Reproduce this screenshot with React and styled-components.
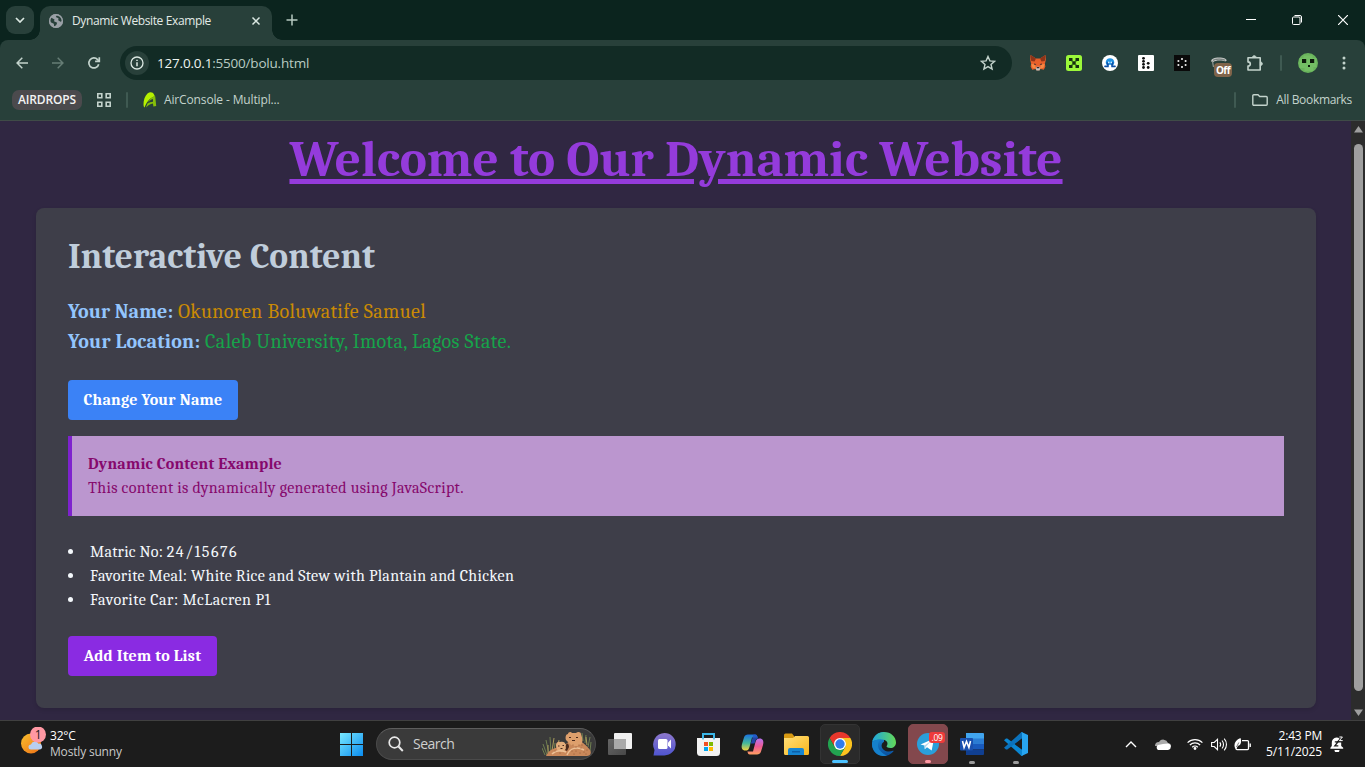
import React from "react";
import styled, { createGlobalStyle } from "styled-components";

const GlobalStyle = createGlobalStyle`
  * { box-sizing: border-box; }
  html, body { margin: 0; padding: 0; overflow: hidden; }
  body { font-family: "Segoe UI Variable", "Open Sans", "Noto Sans", sans-serif; }
  h1, h2, p, ul { margin: 0; padding: 0; }
  button { border: 0; padding: 0; background: none; font: inherit; color: inherit; }
  svg { display: block; flex: none; }
`;

const Screen = styled.div`
  width: 1365px;
  height: 767px;
  display: flex;
  flex-direction: column;
  overflow: hidden;
  background: #0b241e;
`;

const Label = styled.span`
  font-size: ${(p) => p.$size || 12}px;
  font-weight: ${(p) => p.$weight || 400};
  letter-spacing: ${(p) => p.$track || 0}px;
  color: ${(p) => p.$color || "#e3ebe7"};
  line-height: 16px;
  white-space: nowrap;
`;

/* ---------- tab strip ---------- */
const TabStrip = styled.div`
  height: 40px;
  flex: none;
  display: flex;
  padding: 6px 0 0 6px;
  background: #0b241e;
`;
const TabSearch = styled.button`
  width: 28px;
  height: 28px;
  border-radius: 9px;
  background: #28403a;
  display: flex;
  align-items: center;
  justify-content: center;
`;
const Tab = styled.div`
  position: relative;
  width: 232px;
  height: 34px;
  margin-left: 6px;
  padding: 0 11px 5px 8px;
  display: flex;
  align-items: center;
  border-radius: 10px 10px 0 0;
  background: #28403a;
  &::before, &::after {
    content: "";
    position: absolute;
    bottom: 0;
    width: 10px;
    height: 10px;
  }
  &::before { left: -10px; background: radial-gradient(circle at 0 0, transparent 9.5px, #28403a 10px); }
  &::after { right: -10px; background: radial-gradient(circle at 100% 0, transparent 9.5px, #28403a 10px); }
`;
const TabTitle = styled(Label)`
  flex: 1;
  margin-left: 8px;
`;
const NewTab = styled.button`
  width: 28px;
  height: 28px;
  margin-left: 6px;
  display: flex;
  align-items: center;
  justify-content: center;
`;
const WindowControls = styled.div`
  margin-left: auto;
  margin-right: -1px;
  height: 28px;
  display: flex;
`;
const WindowButton = styled.button`
  width: 46px;
  display: flex;
  align-items: center;
  justify-content: center;
`;

/* ---------- toolbar ---------- */
const Chrome = styled.div`
  height: 81px;
  flex: none;
  display: flex;
  flex-direction: column;
  padding-top: 6px;
  border-radius: 8px 8px 0 0;
  border-bottom: 1px solid #3f4b47;
  background: #28403a;
`;
const Toolbar = styled.div`
  height: 34px;
  display: flex;
  align-items: center;
  padding: 0 3px 0 4px;
`;
const IconSlot = styled.button`
  position: relative;
  width: ${(p) => p.$w || 36}px;
  height: 34px;
  flex: none;
  display: flex;
  align-items: center;
  justify-content: center;
`;
const Omnibox = styled.div`
  width: 892px;
  height: 34px;
  margin: 0 8px;
  display: flex;
  align-items: center;
  padding: 0 16px 0 5px;
  border-radius: 17px;
  background: #122b25;
`;
const SiteInfo = styled.div`
  width: 24px;
  height: 24px;
  border-radius: 50%;
  background: #28403a;
  display: flex;
  align-items: center;
  justify-content: center;
  margin-right: 8px;
`;
const Url = styled(Label)`
  flex: 1;
  line-height: 18px;
  b { font-weight: 400; color: #eef5f2; }
`;
const Divider = styled.span`
  width: 2px;
  height: 16px;
  border-radius: 1px;
  background: #3f5a52;
  margin: ${(p) => p.$m || 0};
`;
const OffBadge = styled.span`
  position: absolute;
  left: 14px;
  top: 17px;
  width: 18px;
  height: 14px;
  border-radius: 4px;
  background: #80644a;
  color: #fff;
  font-size: 10px;
  font-weight: 700;
  line-height: 14px;
  letter-spacing: -0.5px;
  text-align: center;
`;

const Bookmarks = styled.div`
  height: 40px;
  display: flex;
  align-items: center;
  padding: 0 13px 0 12px;
`;
const GroupChip = styled.span`
  width: 70px;
  height: 20px;
  border-radius: 7px;
  background: #4b4a4d;
  display: flex;
  align-items: center;
  justify-content: center;
`;
const BookmarkItem = styled.div`
  display: flex;
  align-items: center;
  gap: ${(p) => p.$gap}px;
  margin-left: ${(p) => p.$push || "0"};
`;

/* ---------- web page ---------- */
const Viewport = styled.div`
  height: 599px;
  flex: none;
  display: flex;
  background: #302742;
`;
const Page = styled.main`
  width: 1351px;
  padding: 8px 35px 0 36px;
  font-family: Cambria, Caladea, "Liberation Serif", serif;
`;
const Title = styled.h1`
  height: 79px;
  line-height: 62px;
  font-size: 51.2px;
  font-weight: 700;
  text-align: center;
  color: #943bdb;
  text-decoration: underline;
  text-decoration-thickness: 5px;
  text-underline-offset: 3px;
`;
const Card = styled.section`
  height: 500px;
  padding: 32px;
  border-radius: 8px;
  background: #3e3e49;
  box-shadow: 0 2px 4px rgba(0, 0, 0, 0.12);
`;
const Heading = styled.h2`
  font-size: 35.5px;
  line-height: 34px;
  height: 57px;
  letter-spacing: 0.05px;
  color: #c0cddb;
`;
const Fact = styled.p`
  font-size: 20px;
  line-height: 30px;
  white-space: nowrap;
  color: ${(p) => p.$color};
  letter-spacing: 0.4px;
  strong { color: #93c5fd; letter-spacing: ${(p) => p.$track}px; }
`;
const ActionButton = styled.button`
  display: block;
  height: 40px;
  width: ${(p) => p.$w}px;
  margin-top: ${(p) => p.$mt}px;
  border-radius: 4px;
  background: ${(p) => p.$bg};
  color: #fff;
  font-size: 16px;
  font-weight: 700;
  line-height: 24px;
  letter-spacing: 0.25px;
  white-space: nowrap;
`;
const Callout = styled.div`
  height: 80px;
  margin-top: 16px;
  padding: 16px;
  border-left: 4px solid #7e22ce;
  background: #bb96cf;
  color: #86086c;
  font-size: 16px;
  line-height: 24px;
  letter-spacing: 0.32px;
  strong { display: block; letter-spacing: 0.23px; }
`;
const List = styled.ul`
  margin-top: 24px;
  list-style: none;
`;
const Item = styled.li`
  display: flex;
  align-items: center;
  height: 24px;
  font-size: 16px;
  line-height: 24px;
  color: #f4f8fc;
  white-space: pre;
  letter-spacing: ${(p) => p.$track}px;
  &::before {
    content: "";
    width: 5px;
    height: 5px;
    margin: 0 17px 1px 0;
    border-radius: 50%;
    background: #f4f8fc;
  }
`;
const Digits = styled.span`
  letter-spacing: 1.5px;
`;
const Scrollbar = styled.div`
  width: 14px;
  display: flex;
  flex-direction: column;
  align-items: center;
  justify-content: space-between;
  padding: 5px 0 4px 0;
  background: #2c2c2c;
`;
const Thumb = styled.div`
  width: 9px;
  height: 547px;
  margin-bottom: 7px;
  border-radius: 5px;
  background: #9f9f9f;
`;

/* ---------- taskbar ---------- */
const Taskbar = styled.footer`
  height: 47px;
  flex: none;
  display: flex;
  border-top: 1px solid #404040;
  background: #1c1c1c;
`;
const Weather = styled.div`
  width: 329px;
  padding: 6px 0 0 20px;
  display: flex;
`;
const WeatherText = styled.div`
  display: flex;
  flex-direction: column;
  padding-top: 1px;
  margin-left: 4px;
`;
const TaskSlot = styled.div`
  position: relative;
  width: 44px;
  height: 46px;
  display: flex;
  align-items: center;
  justify-content: center;
`;
const ActiveTile = styled.div`
  position: relative;
  width: 40px;
  height: 40px;
  border-radius: 5px;
  display: flex;
  align-items: center;
  justify-content: center;
  background: ${(p) => p.$bg};
  border: 1px solid ${(p) => p.$edge};
`;
const Indicator = styled.span`
  position: absolute;
  bottom: ${(p) => p.$bottom || 0}px;
  left: 50%;
  width: ${(p) => p.$w || 6}px;
  height: 3px;
  transform: translateX(-50%);
  border-radius: 2px;
  background: ${(p) => p.$color || "#9b9b9b"};
`;
const CountBadge = styled.span`
  position: absolute;
  left: 20px;
  top: 7px;
  width: 16px;
  height: 11px;
  border-radius: 3px;
  background: #ee3b3b;
  color: #fff;
  font-size: 8.5px;
  line-height: 11px;
  text-align: center;
  letter-spacing: -0.4px;
`;
const SearchBox = styled.div`
  width: 220px;
  height: 32px;
  margin: 7px 2px 0 3px;
  padding: 0 3px 0 11px;
  display: flex;
  align-items: center;
  border-radius: 16px;
  border: 1px solid #4a4a4a;
  border-top-color: #5e5e5e;
  background: #3a3a3a;
`;
const SearchLabel = styled(Label)`
  flex: 1;
  margin-left: 9px;
`;
const Tray = styled.div`
  margin-left: auto;
  display: flex;
  align-items: center;
  padding-right: 13px;
`;
const TrayIcon = styled.span`
  width: ${(p) => p.$w}px;
  display: flex;
  justify-content: center;
`;
const Clock = styled.div`
  width: 64px;
  display: flex;
  flex-direction: column;
  align-items: flex-end;
`;

/* ---------- drawings ---------- */
const Svg = ({ w = 16, h, vb, children, ...rest }) => (
  <svg width={w} height={h || w} viewBox={vb || `0 0 ${w} ${h || w}`} fill="none" {...rest}>{children}</svg>
);
const line = { stroke: "#c3d3cc", strokeWidth: 1.7 };

const GlobeIcon = () => (
  <Svg w={16}>
    <circle cx="8" cy="8" r="7" fill="#9aa0a6" />
    <path d="M3 4.500 6.500 6.500 6 8.200 9.200 9.700 8.300 12 6.200 13.500 5.800 10.800 2.600 9.200 1.600 7ZM9 1.800 7.800 4 10.500 5.200 10.200 7.200 12.600 8.800 14.300 8A6.500 6.500 0 0 0 9 1.800Z" fill="#28403a" />
    <circle cx="8" cy="8" r="6.3" stroke="#9aa0a6" strokeWidth="1.4" />
  </Svg>
);
const ReloadIcon = () => (
  <Svg w={16}>
    <path d="M12.7 9.2A5 5 0 1 1 11.6 4.6L13 6" {...line} />
    <path d="M13.3 2.2V6.4H9.1" {...line} />
  </Svg>
);
const FoxIcon = () => (
  <Svg w={18} h={16}>
    <path d="M1.500 0 7 3.500h4L16.500 0l.3 5-1 4 .6 2.500-1.600 3.200-3.300-.7-1 1.200h-3l-1-1.200-3.300.7L1.600 11.500 2.200 9l-1-4Z" fill="#e8602a" />
    <path d="M1.500 0 7 3.500 5.500 6.500 2.200 6ZM16.500 0 11 3.500l1.500 3L15.800 6Z" fill="#8f3419" />
    <path d="M2.200 9 6 9.500 7 13.500l-3.300-.5ZM15.800 9 12 9.500l-1 4 3.300-.5Z" fill="#f58a45" />
    <path d="M5.500 8.300 7.300 9.600l-2 .4ZM12.500 8.300l-1.800 1.300 2 .4Z" fill="#2a2530" />
    <path d="m6.800 13 .8-1.200h2.800l.8 1.200-.6 2.500H7.400Z" fill="#c9c4c0" />
    <path d="M7.800 12h2.400l.2 1.300H7.600Z" fill="#30282c" />
  </Svg>
);
const Dots = ({ pts, r = 1.1, fill }) => pts.map(([x, y], i) => <circle key={i} cx={x} cy={y} r={r} fill={fill} />);
const LimeIcon = () => (
  <Svg w={16}>
    <rect width="16" height="16" rx="2.500" fill="#9cf83a" />
    <path d="M3 3h3.500v3H3zM9.500 3H13v3H9.500zM3 10h3.500v3H3zM9.500 10H13v3H9.500zM6.300 6.300h3.400v3.400H6.300z" fill="#16300f" />
    <path d="M5.500 5.500h1.300v1.300H5.500zM9.200 5.500h1.300v1.300H9.200zM5.500 9.200h1.300v1.300H5.500zM9.200 9.200h1.300v1.300H9.200z" fill="#2c5a1b" />
  </Svg>
);
const OctoIcon = () => (
  <Svg w={16}>
    <circle cx="8" cy="8" r="8" fill="#fff" />
    <path d="M5.300 10.800C2.500 8.500 3.500 3.300 8 3.300S13.500 8.500 10.700 10.800" fill="#1f93e4" />
    <path d="M3 11.300h3.200c.7-1.200-.9-2-.9-3.800M13 11.300H9.800c-.7-1.200.9-2 .9-3.800" stroke="#0c4fa6" strokeWidth="1.700" strokeLinecap="round" />
    <path d="M6.800 12.500V9.800h2.400v2.700Z" fill="#fff" />
    <circle cx="6.700" cy="7.300" r=".9" fill="#c6e9ff" /><circle cx="9.300" cy="7.300" r=".9" fill="#c6e9ff" />
  </Svg>
);
const DotsLightIcon = () => (
  <Svg w={16}>
    <rect width="16" height="16" rx="1" fill="#fff" />
    <Dots r={1.4} fill="#101010" pts={[[5.500, 3.300], [5.500, 6.300], [5.500, 9.300], [5.500, 12.500], [10.200, 8.300], [10.200, 12.500]]} />
  </Svg>
);
const DotsDarkIcon = () => (
  <Svg w={16}>
    <rect width="16" height="16" fill="#0a0a0a" />
    <Dots r={1.05} fill="#f0f0f0" pts={[[8, 4], [4.400, 6], [11.600, 6], [4.400, 10], [11.600, 10], [8, 12]]} />
  </Svg>
);
const HatIcon = () => (
  <Svg w={18} h={16}>
    <path d="M1 6.500C1.500 3.500 4 2.500 9 2.500s7 1.200 7.800 3l-1.600 1C13 5 5 5 3.500 7Z" fill="#c0c3c1" />
    <path d="M3 5.300C6 3.700 12 3.700 15 5.200" stroke="#5d6965" strokeWidth=".9" />
    <path d="M2.500 6.500 3.500 12" stroke="#8b9490" strokeWidth="1.300" />
  </Svg>
);
const PuzzleIcon = () => (
  <Svg w={18}>
    <path d="M2 3.800h12.200v12.200H2v-3.900c3.100-.2 3.100-4 0-4.200Z" {...line} strokeWidth="1.600" strokeLinejoin="round" />
    <path d="M6.300 3.500C6.500 1 10 1 10.200 3.500ZM14.300 7.800c2.800.3 2.800 3.600 0 3.900Z" fill="#c3d3cc" stroke="#c3d3cc" strokeWidth=".8" />
  </Svg>
);
const AvatarIcon = () => (
  <Svg w={20}>
    <circle cx="10" cy="10" r="10" fill="#69b45c" />
    <path d="M1.500 5h4V2.500h9V5h4v9h-3v4h-9v-3h-5Z" fill="#7cc66c" opacity=".55" />
    <path d="M4 6h4.200v4H4zM12 6h4.200v4H12zM10 12h2v2h-2z" fill="#0c1a0b" />
  </Svg>
);

const BearArt = () => (
  <Svg w={50} h={26}>
    <g stroke="#6f8050" strokeWidth="1">
      <path d="M5 24 1 13M7 23 4 9M9 22 8 6M12 21l1-9M3 24 0 17M41 10l-1-8M43 12l1-8M46 16l2-10M48 20l1-9" />
      <path d="M10 20 12 7M15 18l2-9M45 14l-1-8M6 22 6 14" stroke="#a89a5c" />
    </g>
    <path d="M4 25C6 20 11 17 17 16l7-3c3-3 8-5 13-3 4 1 8 5 11 9 2 3 0 6-3 6H8Z" fill="#c9885a" />
    <path d="M24 9c-1-3 0-6 2-6 0-2 3-3 4-1h4c2-2 5-1 5 1 1 3 2 6 1 9-3 4-9 4-12 1Z" fill="#dd9f6c" />
    <path d="M14 14c0-2 2-4 4-3 3-1 5 0 6 3 1 3-1 6-4 7-4 0-6-3-6-7Z" fill="#e3ad7b" />
    <path d="M24 14c1-3 3-1 3 2l-2 4-2-1c2-2 0-3 1-5Z" fill="#4a2a1c" />
    <path d="M27 6.500h2M34 6.500h2M30 9.500h3M16 15h1.500M20.500 14.500H22M18.500 17.500h2" stroke="#4a2a1c" strokeWidth="1.200" />
    <path d="M25 24c3-7 10-9 17-5M10 23c4-4 9-4 14-2" stroke="#ecc096" strokeWidth="1.500" />
    <Dots r={0.55} fill="#8e5432" pts={[[31, 14], [34, 16], [37, 14], [39, 17], [42, 21], [34, 20], [30, 20], [44, 23], [38, 22], [18, 22], [13, 20], [45, 19], [32, 23], [40, 14]]} />
  </Svg>
);
const grads = (
  <svg width="0" height="0" aria-hidden="true">
    <defs>
      <linearGradient id="win" x1="0" y1="0" x2="1" y2="1"><stop stopColor="#79e9ff" /><stop offset="1" stopColor="#0a8cf0" /></linearGradient>
      <linearGradient id="sun" x1="0" y1="0" x2="1" y2="1"><stop stopColor="#f9c02e" /><stop offset="1" stopColor="#ee6f16" /></linearGradient>
      <linearGradient id="chat" x1="0" y1="0" x2="0" y2="1"><stop stopColor="#8e78cc" /><stop offset="1" stopColor="#4f55d0" /></linearGradient>
      <linearGradient id="cpL" x1="0" y1="0" x2="0" y2="1"><stop stopColor="#1b73e0" /><stop offset=".55" stopColor="#45b998" /><stop offset="1" stopColor="#f5d33c" /></linearGradient>
      <linearGradient id="cpR" x1="0" y1="0" x2="0" y2="1"><stop stopColor="#b672f0" /><stop offset=".5" stopColor="#ee5a94" /><stop offset="1" stopColor="#ffa060" /></linearGradient>
      <linearGradient id="fold" x1="0" y1="0" x2="1" y2="1"><stop stopColor="#ffe07a" /><stop offset="1" stopColor="#f9b51b" /></linearGradient>
      <linearGradient id="edgeG" x1="0" y1="0" x2="1" y2="0"><stop stopColor="#1ea7e0" /><stop offset="1" stopColor="#64d957" /></linearGradient>
      <linearGradient id="edgeB" x1="0" y1="0" x2="0" y2="1"><stop stopColor="#1c8fdb" /><stop offset="1" stopColor="#0a4f9e" /></linearGradient>
      <linearGradient id="view" x1="0" y1="0" x2="1" y2="1"><stop stopColor="#666" /><stop offset="1" stopColor="#484848" /></linearGradient>
    </defs>
  </svg>
);
const WindowsIcon = () => (
  <Svg w={23}><path d="M0 0h11v11H0zM12 0h11v11H12zM0 12h11v11H0zM12 12h11v11H12z" fill="url(#win)" /></Svg>
);
const TaskViewIcon = () => (
  <Svg w={24} h={22}>
    <rect x="6" y="0" width="18" height="16" rx="1" fill="#f0f0f0" />
    <rect x="0" y="6" width="18" height="16" rx="1" fill="url(#view)" />
    <rect x="6" y="6" width="12" height="10" fill="#a9a9a9" />
  </Svg>
);
const ChatIcon = () => (
  <Svg w={23}>
    <path d="M11.500 0a11.200 11.200 0 1 1 0 22.400H.5L1.500 17A11.500 11.500 0 0 1 11.500 0Z" fill="url(#chat)" />
    <rect x="5" y="6" width="9.500" height="10" rx="1.500" fill="#fff" />
    <path d="m15 9.500 3-3v9l-3-3Z" fill="#fff" />
  </Svg>
);
const StoreIcon = () => (
  <Svg w={23}>
    <path d="M6 5.500V1h11v4.500" stroke="#3bb7e8" strokeWidth="2" />
    <path d="M0 5h23v14.500a3.500 3.500 0 0 1-3.500 3.500h-16A3.500 3.500 0 0 1 0 19.500Z" fill="#f2f2f2" />
    <path d="M6 3v3.500M17 3v3.500" stroke="#3bb7e8" strokeWidth="1.500" />
    <path d="M7 9h4v4H7z" fill="#f25022" /><path d="M12 9h4v4h-4z" fill="#7fba00" />
    <path d="M7 14h4v4H7z" fill="#00a4ef" /><path d="M12 14h4v4h-4z" fill="#ffb900" />
  </Svg>
);
const CopilotIcon = () => (
  <Svg w={23}>
    <path d="M7 1.500h7c2 0 2 1 2.600 3L11 4.500 8.500 14c-.8 3-2 3.500-4 3.500C1 17.500 0 15 1 11l2-6.500C3.800 2.200 5 1.500 7 1.500Z" fill="url(#cpL)" />
    <path d="M16 21.500H9c-2 0-2-1-2.600-3h5.600L14.500 9c.8-3 2-3.500 4-3.500C22 5.500 23 8 22 12l-2 6.500c-.8 2.300-2 3-4 3Z" fill="url(#cpR)" />
    <path d="M12.500 1.500h1.500c1.800 0 2.600 2 3.200 4-1.500 0-2.400.8-3 3l-.6 2H9.800L11.500 5Z" fill="#2450c8" opacity=".8" />
  </Svg>
);
const ExplorerIcon = () => (
  <Svg w={25} h={22}>
    <path d="M0 2a1.500 1.500 0 0 1 1.500-1.500H8L10 3v4H0Z" fill="#d89a12" />
    <path d="M0 5h9l2-2h12.500A1.500 1.500 0 0 1 25 4.500v16a1.500 1.500 0 0 1-1.500 1.500h-22A1.500 1.500 0 0 1 0 20.500Z" fill="url(#fold)" />
    <path d="M4 22v-5a2 2 0 0 1 2-2h12a2 2 0 0 1 2 2v5Z" fill="#1685d1" /><path d="M8 18h8v1.500H8z" fill="#0c5fa8" />
  </Svg>
);
const ChromeIcon = () => (
  <Svg w={24}>
    <path d="M1.600 6A12 12 0 0 1 22.400 6H12L6.800 15Z" fill="#e8372c" />
    <path d="M22.400 6A12 12 0 0 1 12 24l5.200-9V9L12 6Z" fill="#fcc31e" />
    <path d="M1.600 6A12 12 0 0 0 12 24l5.200-9H6.800Z" fill="#22a350" />
    <circle cx="12" cy="12" r="6" fill="#fff" /><circle cx="12" cy="12" r="4.700" fill="#2f7bed" />
  </Svg>
);
const EdgeIcon = () => (
  <Svg w={24}>
    <path d="M12 0a12 12 0 1 0 9.500 19.300c.3-.4-.1-.8-.6-.5C16 21 10 18.500 9.600 14c-.1-2 1-3.300 2.400-4.200Z" fill="url(#edgeB)" />
    <path d="M.2 10C1.500 4 6 0 12 0c7 0 12 5 12 10.500 0 3.500-2.500 5.500-5.500 5.500-3 0-4.500-1-3.800-1.900 2-2.600.3-6.600-4.700-6.600C5.500 7.500 1.500 8 .2 10Z" fill="url(#edgeG)" />
    <path d="M.1 10.500C1.300 8.500 5 7.200 9.500 7.500 5.500 9 4.500 15 8.500 19c1.800 2 4 3.500 6.500 4.600C5 26-.8 18 .1 10.500Z" fill="#1580cc" />
  </Svg>
);
const TelegramIcon = () => (
  <Svg w={22}>
    <circle cx="11" cy="11" r="11" fill="#2a9fda" />
    <path d="m3.500 11.500 13.500-6-2.300 12-4.700-3.200-2.200 2-.3-3.800Z" fill="#fff" /><path d="m7.500 12.500 7-5-5.500 6-1.200 2.800Z" fill="#b4d8ee" />
  </Svg>
);
const WordIcon = () => (
  <Svg w={24} h={22}>
    <path d="M6 0h17a1 1 0 0 1 1 1v5H6Z" fill="#41a5ee" /><path d="M6 5.500h18V11H6z" fill="#2b7cd3" />
    <path d="M6 11h18v5.500H6z" fill="#185abd" /><path d="M6 16.500h18V21a1 1 0 0 1-1 1H6Z" fill="#103f91" />
    <rect x="0" y="5" width="13" height="12.500" rx="1" fill="#1950ae" />
    <path d="m2.500 8 1.600 6.500 2.400-6 2.400 6L10.500 8" stroke="#fff" strokeWidth="1.600" />
  </Svg>
);
const CodeIcon = () => (
  <Svg w={24}>
    <path d="M0 8.300 2 6.600 3.300 6.600 18.500 18v6h-1Z" fill="#0a86d2" />
    <path d="M0 15.700l2 1.700h1.300L18.500 6V0h-1Z" fill="#0b72bc" />
    <path d="M17.500 0 24 3v18l-6.500 3 .5-2V2Z" fill="#28a5f0" />
    <path d="m18 6.800-6.800 5.200 6.800 5.200Z" fill="#1c1c1c" />
  </Svg>
);
const WeatherIcon = () => (
  <Svg w={26} h={28}>
    <circle cx="11" cy="16.500" r="10" fill="url(#sun)" />
    <path d="M11 22.500a2.500 2.500 0 0 1 0-5 4 4 0 0 1 7.500-.8 3 3 0 0 1 1.500 5.800Z" fill="#b8cff0" />
    <circle cx="18" cy="7.500" r="8" fill="#ff98a3" />
    <text x="18.200" y="11.800" textAnchor="middle" fontFamily="Open Sans, sans-serif" fontSize="12" fill="#1c1c1c">1</text>
  </Svg>
);
const BellIcon = () => (
  <Svg w={15} h={16}>
    <path d="M1.800 7A5 5 0 0 1 6.500 1.500c3 0 4.500 2 4.700 4.500v4l2 1.800v1H.4v-1l1.400-1.800Z" fill="#fff" /><path d="M4.500 14h5a2.500 2.500 0 0 1-5 0Z" fill="#fff" />
    <path d="M4.800 5.800H8L4.800 9.900h3.500" stroke="#1c1c1c" strokeWidth="1.300" />
    <path d="M8.800 1h4L9 5.300h4.300" stroke="#1c1c1c" strokeWidth="2.600" /><path d="M9.400 1h3L9.400 4.600h3.300" stroke="#fff" strokeWidth="1" />
  </Svg>
);

export default function App() {
  return (
    <Screen>
      <GlobalStyle />
      <TabStrip>
        <TabSearch><Svg w={10} h={6}><path d="m1 1 4 4 4-4" stroke="#dbe8e2" strokeWidth="1.700" /></Svg></TabSearch>
        <Tab>
          <GlobeIcon />
          <TabTitle $track={-0.38}>Dynamic Website Example</TabTitle>
          <Svg w={10}><path d="m1.500 1.500 7 7m0-7-7 7" stroke="#dbe8e2" strokeWidth="1.500" /></Svg>
        </Tab>
        <NewTab><Svg w={12}><path d="M6 .5v11M.5 6h11" stroke="#b7c9c1" strokeWidth="1.500" /></Svg></NewTab>
        <WindowControls>
          <WindowButton><Svg w={10}><path d="M0 4.500h10" stroke="#fff" /></Svg></WindowButton>
          <WindowButton>
            <Svg w={10}><rect x=".5" y="2" width="7.500" height="7.500" rx="1" stroke="#fff" /><path d="M2.500.5H8A1.500 1.500 0 0 1 9.500 2v5.500" stroke="#fff" /></Svg>
          </WindowButton>
          <WindowButton><Svg w={10}><path d="m0 0 10 10M10 0 0 10" stroke="#fff" strokeWidth="1.200" /></Svg></WindowButton>
        </WindowControls>
      </TabStrip>

      <Chrome>
        <Toolbar>
          <IconSlot><Svg w={12}><path d="M12 6H1M6.300.8 1.100 6l5.200 5.200" {...line} strokeWidth="1.500" /></Svg></IconSlot>
          <IconSlot><Svg w={12}><path d="M0 6h11M5.700.8 10.900 6l-5.200 5.200" {...line} strokeWidth="1.500" stroke="#667d75" /></Svg></IconSlot>
          <IconSlot><ReloadIcon /></IconSlot>
          <Omnibox>
            <SiteInfo>
              <Svg w={14}><circle cx="7" cy="7" r="6" stroke="#dbe8e2" strokeWidth="1.300" /><path d="M7 6.200v4M7 3.700v1.400" stroke="#dbe8e2" strokeWidth="1.500" /></Svg>
            </SiteInfo>
            <Url $size={13.5} $track={-0.2} $color="#b9cbc3"><b>127.0.0.1</b>:5500/bolu.html</Url>
            <Svg w={16}><path d="m8 1.500 1.900 4.400 4.700.4-3.600 3.100 1.100 4.700L8 11.600l-4.100 2.500L5 9.400 1.400 6.300l4.700-.4Z" stroke="#c3d3cc" strokeWidth="1.400" /></Svg>
          </Omnibox>
          <IconSlot><FoxIcon /></IconSlot>
          <IconSlot><LimeIcon /></IconSlot>
          <IconSlot><OctoIcon /></IconSlot>
          <IconSlot><DotsLightIcon /></IconSlot>
          <IconSlot><DotsDarkIcon /></IconSlot>
          <IconSlot $w={38}><HatIcon /><OffBadge>Off</OffBadge></IconSlot>
          <IconSlot $w={34}><PuzzleIcon /></IconSlot>
          <Divider $m="0 0 0 8px" />
          <IconSlot $w={52}><AvatarIcon /></IconSlot>
          <IconSlot $w={20}><Svg w={4} h={14}><Dots r={1.5} fill="#c3d3cc" pts={[[2, 1.900], [2, 7], [2, 12.100]]} /></Svg></IconSlot>
        </Toolbar>
        <Bookmarks>
          <GroupChip><Label $weight={600} $track={-0.16} $color="#f3f3f3">AIRDROPS</Label></GroupChip>
          <IconSlot $w={44}>
            <Svg w={14}><path d="M.8.800h4v4h-4zM9.200.800h4v4h-4zM.8 9.200h4v4h-4zM9.200 9.200h4v4h-4z" stroke="#c3d3cc" strokeWidth="1.600" /></Svg>
          </IconSlot>
          <Divider $m="0 15px 0 0" />
          <BookmarkItem $gap={7}>
            <Svg w={14} h={16}><path d="M1.500 15.500C-.5 14 .5 5 4.500 1.500 7-.5 10 0 11 2.500L12 4.500C8 5 4 9 1.500 15.500Z" fill="#b5f000" /><path d="m10.500 4.500 1.700-.3 1 9.800-2.800.5-.5-3c-2.600.4-4.700 1.700-7 4 1.500-5 4-9 7.600-11Z" fill="#86bf0a" /><path d="M4.500 11.500C6 9 7.800 7.500 10 7v2.800c-2 .2-3.800.8-5.500 1.700Z" fill="#28403a" /></Svg>
            <Label $track={-0.14} $color="#c3d3cc">AirConsole - Multipl...</Label>
          </BookmarkItem>
          <BookmarkItem $gap={8} $push="auto">
            <Divider $m="0 8px 0 0" />
            <Svg w={16} h={12}><path d="M.8 1.800A1 1 0 0 1 1.800.800H6l1.700 1.700h6.500a1 1 0 0 1 1 1v6.700a1 1 0 0 1-1 1H1.800a1 1 0 0 1-1-1Z" stroke="#c3d3cc" strokeWidth="1.400" /></Svg>
            <Label $track={-0.32} $color="#c3d3cc">All Bookmarks</Label>
          </BookmarkItem>
        </Bookmarks>
      </Chrome>

      <Viewport>
        <Page>
          <Title>Welcome to Our Dynamic Website</Title>
          <Card>
            <Heading>Interactive Content</Heading>
            <Fact $color="#ca8a04" $track={0.1}><strong>Your Name:</strong> Okunoren Boluwatife Samuel</Fact>
            <Fact $color="#16a34a" $track={0.24}><strong>Your Location:</strong> Caleb University, Imota, Lagos State.</Fact>
            <ActionButton $w={170} $mt={23} $bg="#3b82f6">Change Your Name</ActionButton>
            <Callout>
              <strong>Dynamic Content Example</strong>
              This content is dynamically generated using JavaScript.
            </Callout>
            <List>
              <Item $track={0.22}>Matric No: <Digits>24/15676</Digits></Item>
              <Item $track={0.28}>Favorite Meal: White Rice and Stew with Plantain and Chicken</Item>
              <Item $track={0.47}>Favorite Car: McLacren P1</Item>
            </List>
            <ActionButton $w={149} $mt={24} $bg="#8a2be2">Add Item to List</ActionButton>
          </Card>
        </Page>
        <Scrollbar>
          <Svg w={9} h={7}><path d="M4.500 0 9 6.500H0Z" fill="#9f9f9f" /></Svg>
          <Thumb />
          <Svg w={9} h={7}><path d="M4.500 7 9 .500H0Z" fill="#9f9f9f" /></Svg>
        </Scrollbar>
      </Viewport>

      <Taskbar>
        <Weather>
          <WeatherIcon />
          <WeatherText>
            <Label $track={-0.2} $color="#fff">32°C</Label>
            <Label $track={-0.18} $color="#c9c9c9">Mostly sunny</Label>
          </WeatherText>
        </Weather>
        <TaskSlot><WindowsIcon /></TaskSlot>
        <SearchBox>
          <Svg w={16}><circle cx="6.500" cy="6.500" r="5.300" stroke="#e8e8e8" strokeWidth="1.700" /><path d="m10.500 10.500 4.300 4.500" stroke="#e8e8e8" strokeWidth="2" /></Svg>
          <SearchLabel $size={14} $track={-0.5} $color="#cfcfcf">Search</SearchLabel>
          <BearArt />
        </SearchBox>
        <TaskSlot><TaskViewIcon /></TaskSlot>
        <TaskSlot><ChatIcon /></TaskSlot>
        <TaskSlot><StoreIcon /></TaskSlot>
        <TaskSlot><CopilotIcon /></TaskSlot>
        <TaskSlot><ExplorerIcon /></TaskSlot>
        <TaskSlot>
          <ActiveTile $bg="#2a2a2a" $edge="#333"><ChromeIcon /><Indicator $w={16} $color="#4cc2ff" /></ActiveTile>
        </TaskSlot>
        <TaskSlot><EdgeIcon /></TaskSlot>
        <TaskSlot>
          <ActiveTile $bg="#83484d" $edge="#83484d"><TelegramIcon /><CountBadge>.09</CountBadge><Indicator $color="#ff99a4" /></ActiveTile>
        </TaskSlot>
        <TaskSlot><WordIcon /><Indicator $bottom={3} /></TaskSlot>
        <TaskSlot><CodeIcon /><Indicator $bottom={3} /></TaskSlot>
        <Tray>
          <TrayIcon $w={32}><Svg w={12} h={7}><path d="m1 6 5-5 5 5" stroke="#fff" strokeWidth="1.400" /></Svg></TrayIcon>
          <TrayIcon $w={32}>
            <Svg w={16} h={11}><path d="M0 7A4 4 0 0 1 4 3a5 5 0 0 1 9 1 3.500 3.500 0 0 1 3 4Z" fill="#aaa" /><path d="M3 11a3 3 0 0 1 0-5l5-1 5-.500A3.300 3.300 0 0 1 13 11Z" fill="#fff" /></Svg>
          </TrayIcon>
          <TrayIcon $w={32}>
            <Svg w={16} h={12}><g stroke="#fff" strokeWidth="1.200"><path d="M.6 4.600a10.500 10.500 0 0 1 14.800 0M2.900 7a7.200 7.200 0 0 1 10.200 0M5.200 9.300a4 4 0 0 1 5.600 0" /></g><circle cx="8" cy="10.500" r="1.400" fill="#fff" /></Svg>
          </TrayIcon>
          <TrayIcon $w={16}>
            <Svg w={16} h={13}><path d="M.6 4.500h2.600L6.500 1.300v10.400L3.200 8.500H.6ZM8.800 4.400c1 1.200 1 3 0 4.200M11 2.500c2 2.200 2 5.800 0 8M13.200.700c3 3.300 3 8.300 0 11.600" stroke="#fff" strokeWidth="1.100" /></Svg>
          </TrayIcon>
          <TrayIcon $w={31}>
            <Svg w={17} h={13}><path d="M8 2.600h5.500a1 1 0 0 1 1 1v7a1 1 0 0 1-1 1H3a1 1 0 0 1-1-1V9.500" stroke="#fff" strokeWidth="1.300" /><path d="M16.200 5.500v3.500" stroke="#fff" strokeWidth="1.400" /><path d="M6.500 0c1.300 3.500.5 7-2.300 7.800L2 11 .8 9.500C-.5 5 2 2 6.500 0Z" fill="#fff" /><path d="M2.500 9 4.800 4.500" stroke="#1c1c1c" strokeWidth=".6" /></Svg>
          </TrayIcon>
          <Clock>
            <Label $track={-0.2} $color="#fff">2:43 PM</Label>
            <Label $track={-0.1} $color="#fff">5/11/2025</Label>
          </Clock>
          <TrayIcon $w={30}><BellIcon /></TrayIcon>
        </Tray>
      </Taskbar>
      {grads}
    </Screen>
  );
}
